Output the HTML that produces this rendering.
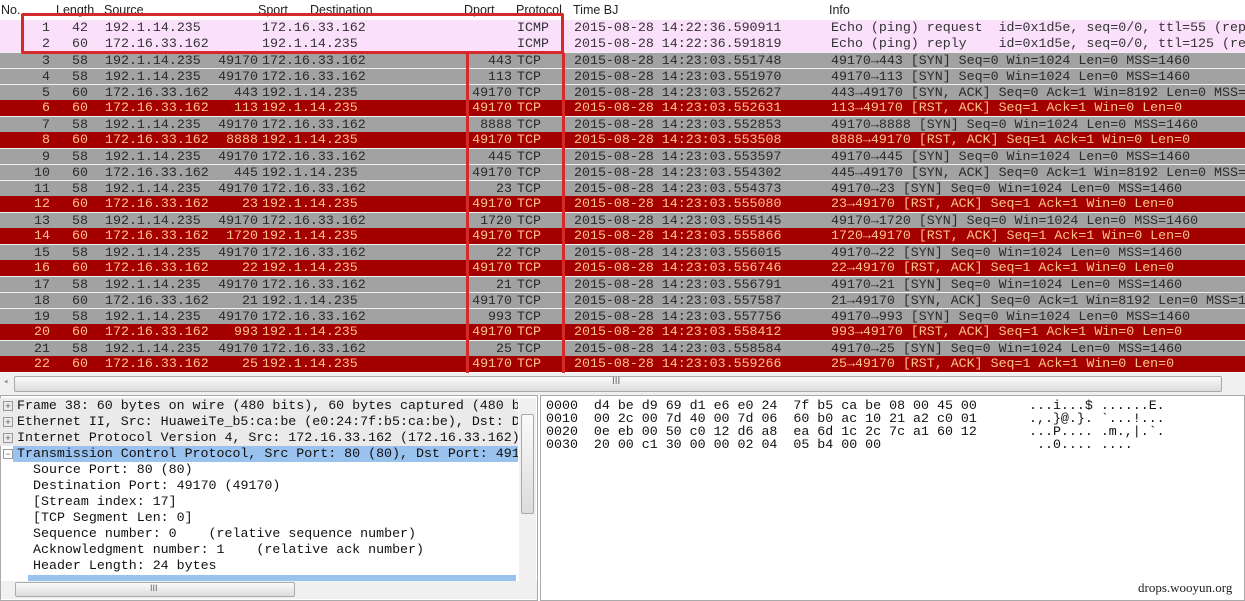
<!DOCTYPE html>
<html><head><meta charset="utf-8"><style>
*{margin:0;padding:0;box-sizing:border-box}
body{width:1245px;height:601px;overflow:hidden;background:#fff;position:relative;font-family:"Liberation Mono","DejaVu Sans Mono",monospace;font-size:13.3px}
.hd{position:absolute;left:0;top:0;width:1245px;height:20px;background:#fff;font-family:"Liberation Sans",sans-serif;font-size:12.5px;color:#222}
.hd span{position:absolute;top:3px}
.r{position:absolute;left:0;width:1245px;height:16px;line-height:16px;white-space:pre;overflow:hidden}
.r span{position:absolute;top:0}
.p{background:#fbe0fb;color:#333}
.g{background:#a2a2a2;color:#2a2a2a;border-top:1px solid #f0f0f0;line-height:15px}
.d{background:#a50000;color:#ffc48a}
.a{right:1195px}.b{right:1157px}.c{left:105px}.e{right:987px}.f{left:262px}.h{right:733px}.i{left:517px}.t{left:574px}.n{left:831px}
.box{position:absolute;border:3px solid #d42a2a;border-radius:2px}
.sb{position:absolute;background:linear-gradient(#fafafa,#dcdcdc);border:1px solid #aaa;border-radius:2px}
.tr{position:absolute;left:0;width:518px;height:16px;line-height:16px;white-space:pre;font-size:13.3px;color:#111;overflow:hidden}
.hx{position:absolute;white-space:pre;font-family:"Liberation Mono",monospace;font-size:13.3px;line-height:13px;color:#111}
.pl{position:absolute;left:3px;width:10px;height:10px;border:1px solid #999;font-size:9px;line-height:8px;text-align:center;color:#555;font-family:"Liberation Sans",sans-serif}
</style></head><body>
<div class="hd"><span style="left:1px">No.</span><span style="left:56px">Length</span><span style="left:104px">Source</span><span style="left:258px">Sport</span><span style="left:310px">Destination</span><span style="left:464px">Dport</span><span style="left:516px">Protocol</span><span style="left:573px">Time BJ</span><span style="left:829px">Info</span></div>

<div class="r p" style="top:20px"><span class="a">1</span><span class="b">42</span><span class="c">192.1.14.235</span><span class="f">172.16.33.162</span><span class="i">ICMP</span><span class="t">2015-08-28 14:22:36.590911</span><span class="n">Echo (ping) request  id=0x1d5e, seq=0/0, ttl=55 (reply in 2)</span></div>
<div class="r p" style="top:36px"><span class="a">2</span><span class="b">60</span><span class="c">172.16.33.162</span><span class="f">192.1.14.235</span><span class="i">ICMP</span><span class="t">2015-08-28 14:22:36.591819</span><span class="n">Echo (ping) reply    id=0x1d5e, seq=0/0, ttl=125 (request in 1)</span></div>
<div class="r g" style="top:52px"><span class="a">3</span><span class="b">58</span><span class="c">192.1.14.235</span><span class="e">49170</span><span class="f">172.16.33.162</span><span class="h">443</span><span class="i">TCP</span><span class="t">2015-08-28 14:23:03.551748</span><span class="n">49170→443 [SYN] Seq=0 Win=1024 Len=0 MSS=1460</span></div>
<div class="r g" style="top:68px"><span class="a">4</span><span class="b">58</span><span class="c">192.1.14.235</span><span class="e">49170</span><span class="f">172.16.33.162</span><span class="h">113</span><span class="i">TCP</span><span class="t">2015-08-28 14:23:03.551970</span><span class="n">49170→113 [SYN] Seq=0 Win=1024 Len=0 MSS=1460</span></div>
<div class="r g" style="top:84px"><span class="a">5</span><span class="b">60</span><span class="c">172.16.33.162</span><span class="e">443</span><span class="f">192.1.14.235</span><span class="h">49170</span><span class="i">TCP</span><span class="t">2015-08-28 14:23:03.552627</span><span class="n">443→49170 [SYN, ACK] Seq=0 Ack=1 Win=8192 Len=0 MSS=1460</span></div>
<div class="r d" style="top:100px"><span class="a">6</span><span class="b">60</span><span class="c">172.16.33.162</span><span class="e">113</span><span class="f">192.1.14.235</span><span class="h">49170</span><span class="i">TCP</span><span class="t">2015-08-28 14:23:03.552631</span><span class="n">113→49170 [RST, ACK] Seq=1 Ack=1 Win=0 Len=0</span></div>
<div class="r g" style="top:116px"><span class="a">7</span><span class="b">58</span><span class="c">192.1.14.235</span><span class="e">49170</span><span class="f">172.16.33.162</span><span class="h">8888</span><span class="i">TCP</span><span class="t">2015-08-28 14:23:03.552853</span><span class="n">49170→8888 [SYN] Seq=0 Win=1024 Len=0 MSS=1460</span></div>
<div class="r d" style="top:132px"><span class="a">8</span><span class="b">60</span><span class="c">172.16.33.162</span><span class="e">8888</span><span class="f">192.1.14.235</span><span class="h">49170</span><span class="i">TCP</span><span class="t">2015-08-28 14:23:03.553508</span><span class="n">8888→49170 [RST, ACK] Seq=1 Ack=1 Win=0 Len=0</span></div>
<div class="r g" style="top:148px"><span class="a">9</span><span class="b">58</span><span class="c">192.1.14.235</span><span class="e">49170</span><span class="f">172.16.33.162</span><span class="h">445</span><span class="i">TCP</span><span class="t">2015-08-28 14:23:03.553597</span><span class="n">49170→445 [SYN] Seq=0 Win=1024 Len=0 MSS=1460</span></div>
<div class="r g" style="top:164px"><span class="a">10</span><span class="b">60</span><span class="c">172.16.33.162</span><span class="e">445</span><span class="f">192.1.14.235</span><span class="h">49170</span><span class="i">TCP</span><span class="t">2015-08-28 14:23:03.554302</span><span class="n">445→49170 [SYN, ACK] Seq=0 Ack=1 Win=8192 Len=0 MSS=1460</span></div>
<div class="r g" style="top:180px"><span class="a">11</span><span class="b">58</span><span class="c">192.1.14.235</span><span class="e">49170</span><span class="f">172.16.33.162</span><span class="h">23</span><span class="i">TCP</span><span class="t">2015-08-28 14:23:03.554373</span><span class="n">49170→23 [SYN] Seq=0 Win=1024 Len=0 MSS=1460</span></div>
<div class="r d" style="top:196px"><span class="a">12</span><span class="b">60</span><span class="c">172.16.33.162</span><span class="e">23</span><span class="f">192.1.14.235</span><span class="h">49170</span><span class="i">TCP</span><span class="t">2015-08-28 14:23:03.555080</span><span class="n">23→49170 [RST, ACK] Seq=1 Ack=1 Win=0 Len=0</span></div>
<div class="r g" style="top:212px"><span class="a">13</span><span class="b">58</span><span class="c">192.1.14.235</span><span class="e">49170</span><span class="f">172.16.33.162</span><span class="h">1720</span><span class="i">TCP</span><span class="t">2015-08-28 14:23:03.555145</span><span class="n">49170→1720 [SYN] Seq=0 Win=1024 Len=0 MSS=1460</span></div>
<div class="r d" style="top:228px"><span class="a">14</span><span class="b">60</span><span class="c">172.16.33.162</span><span class="e">1720</span><span class="f">192.1.14.235</span><span class="h">49170</span><span class="i">TCP</span><span class="t">2015-08-28 14:23:03.555866</span><span class="n">1720→49170 [RST, ACK] Seq=1 Ack=1 Win=0 Len=0</span></div>
<div class="r g" style="top:244px"><span class="a">15</span><span class="b">58</span><span class="c">192.1.14.235</span><span class="e">49170</span><span class="f">172.16.33.162</span><span class="h">22</span><span class="i">TCP</span><span class="t">2015-08-28 14:23:03.556015</span><span class="n">49170→22 [SYN] Seq=0 Win=1024 Len=0 MSS=1460</span></div>
<div class="r d" style="top:260px"><span class="a">16</span><span class="b">60</span><span class="c">172.16.33.162</span><span class="e">22</span><span class="f">192.1.14.235</span><span class="h">49170</span><span class="i">TCP</span><span class="t">2015-08-28 14:23:03.556746</span><span class="n">22→49170 [RST, ACK] Seq=1 Ack=1 Win=0 Len=0</span></div>
<div class="r g" style="top:276px"><span class="a">17</span><span class="b">58</span><span class="c">192.1.14.235</span><span class="e">49170</span><span class="f">172.16.33.162</span><span class="h">21</span><span class="i">TCP</span><span class="t">2015-08-28 14:23:03.556791</span><span class="n">49170→21 [SYN] Seq=0 Win=1024 Len=0 MSS=1460</span></div>
<div class="r g" style="top:292px"><span class="a">18</span><span class="b">60</span><span class="c">172.16.33.162</span><span class="e">21</span><span class="f">192.1.14.235</span><span class="h">49170</span><span class="i">TCP</span><span class="t">2015-08-28 14:23:03.557587</span><span class="n">21→49170 [SYN, ACK] Seq=0 Ack=1 Win=8192 Len=0 MSS=1460</span></div>
<div class="r g" style="top:308px"><span class="a">19</span><span class="b">58</span><span class="c">192.1.14.235</span><span class="e">49170</span><span class="f">172.16.33.162</span><span class="h">993</span><span class="i">TCP</span><span class="t">2015-08-28 14:23:03.557756</span><span class="n">49170→993 [SYN] Seq=0 Win=1024 Len=0 MSS=1460</span></div>
<div class="r d" style="top:324px"><span class="a">20</span><span class="b">60</span><span class="c">172.16.33.162</span><span class="e">993</span><span class="f">192.1.14.235</span><span class="h">49170</span><span class="i">TCP</span><span class="t">2015-08-28 14:23:03.558412</span><span class="n">993→49170 [RST, ACK] Seq=1 Ack=1 Win=0 Len=0</span></div>
<div class="r g" style="top:340px"><span class="a">21</span><span class="b">58</span><span class="c">192.1.14.235</span><span class="e">49170</span><span class="f">172.16.33.162</span><span class="h">25</span><span class="i">TCP</span><span class="t">2015-08-28 14:23:03.558584</span><span class="n">49170→25 [SYN] Seq=0 Win=1024 Len=0 MSS=1460</span></div>
<div class="r d" style="top:356px"><span class="a">22</span><span class="b">60</span><span class="c">172.16.33.162</span><span class="e">25</span><span class="f">192.1.14.235</span><span class="h">49170</span><span class="i">TCP</span><span class="t">2015-08-28 14:23:03.559266</span><span class="n">25→49170 [RST, ACK] Seq=1 Ack=1 Win=0 Len=0</span></div>

<div class="box" style="left:21px;top:13px;width:543px;height:41px"></div>
<div class="box" style="left:466px;top:52px;width:99px;height:331px;border-top:none"></div>

<div style="position:absolute;left:0;top:373px;width:1245px;height:22px;background:#f0f0f0"></div>
<div class="sb" style="left:14px;top:376px;width:1208px;height:16px"></div>
<div style="position:absolute;left:612px;top:376px;font-size:10px;color:#666;font-family:'Liberation Sans',sans-serif">III</div>
<div style="position:absolute;left:3px;top:377px;font-size:9px;color:#888">◂</div>

<div style="position:absolute;left:0;top:395px;width:538px;height:206px;border:1px solid #aaa;background:#fff"></div>
<div style="position:absolute;left:540px;top:395px;width:705px;height:206px;border:1px solid #aaa;background:#fff"></div>

<div class="tr" style="top:398px;background:#eaeaea"><span style="position:absolute;left:17px">Frame 38: 60 bytes on wire (480 bits), 60 bytes captured (480 b</span></div>
<div class="tr" style="top:414px;background:#eaeaea"><span style="position:absolute;left:17px">Ethernet II, Src: HuaweiTe_b5:ca:be (e0:24:7f:b5:ca:be), Dst: D</span></div>
<div class="tr" style="top:430px;background:#eaeaea"><span style="position:absolute;left:17px">Internet Protocol Version 4, Src: 172.16.33.162 (172.16.33.162)</span></div>
<div class="tr" style="top:446px;left:13px;width:505px;background:#99c2ee"><span style="position:absolute;left:4px">Transmission Control Protocol, Src Port: 80 (80), Dst Port: 491</span></div>
<div class="pl" style="top:401px">+</div><div class="pl" style="top:417px">+</div><div class="pl" style="top:433px">+</div><div class="pl" style="top:449px">−</div>
<div class="tr" style="top:462px"><span style="position:absolute;left:33px">Source Port: 80 (80)</span></div>
<div class="tr" style="top:478px"><span style="position:absolute;left:33px">Destination Port: 49170 (49170)</span></div>
<div class="tr" style="top:494px"><span style="position:absolute;left:33px">[Stream index: 17]</span></div>
<div class="tr" style="top:510px"><span style="position:absolute;left:33px">[TCP Segment Len: 0]</span></div>
<div class="tr" style="top:526px"><span style="position:absolute;left:33px">Sequence number: 0    (relative sequence number)</span></div>
<div class="tr" style="top:542px"><span style="position:absolute;left:33px">Acknowledgment number: 1    (relative ack number)</span></div>
<div class="tr" style="top:558px"><span style="position:absolute;left:33px">Header Length: 24 bytes</span></div>
<div style="position:absolute;left:28px;top:575px;width:488px;height:6px;background:#99c2ee"></div>
<div style="position:absolute;left:519px;top:398px;width:17px;height:183px;background:#f0f0f0"></div>
<div class="sb" style="left:521px;top:414px;width:13px;height:100px"></div>
<div style="position:absolute;left:1px;top:581px;width:536px;height:18px;background:#f0f0f0"></div>
<div class="sb" style="left:15px;top:582px;width:280px;height:15px"></div>
<div style="position:absolute;left:150px;top:583px;font-size:9px;color:#666;font-family:'Liberation Sans',sans-serif">III</div>

<div class="hx" style="left:546px;top:399px">0000  d4 be d9 69 d1 e6 e0 24  7f b5 ca be 08 00 45 00
0010  00 2c 00 7d 40 00 7d 06  60 b0 ac 10 21 a2 c0 01
0020  0e eb 00 50 c0 12 d6 a8  ea 6d 1c 2c 7c a1 60 12
0030  20 00 c1 30 00 00 02 04  05 b4 00 00</div>
<div class="hx" style="left:1029px;top:399px">...i...$ ......E.
.,.}@.}. `...!...
...P.... .m.,|.`.
 ..0.... ....</div>
<div style="position:absolute;left:1138px;top:580px;font-family:'Liberation Serif',serif;font-size:13px;color:#222">drops.wooyun.org</div>
</body></html>
